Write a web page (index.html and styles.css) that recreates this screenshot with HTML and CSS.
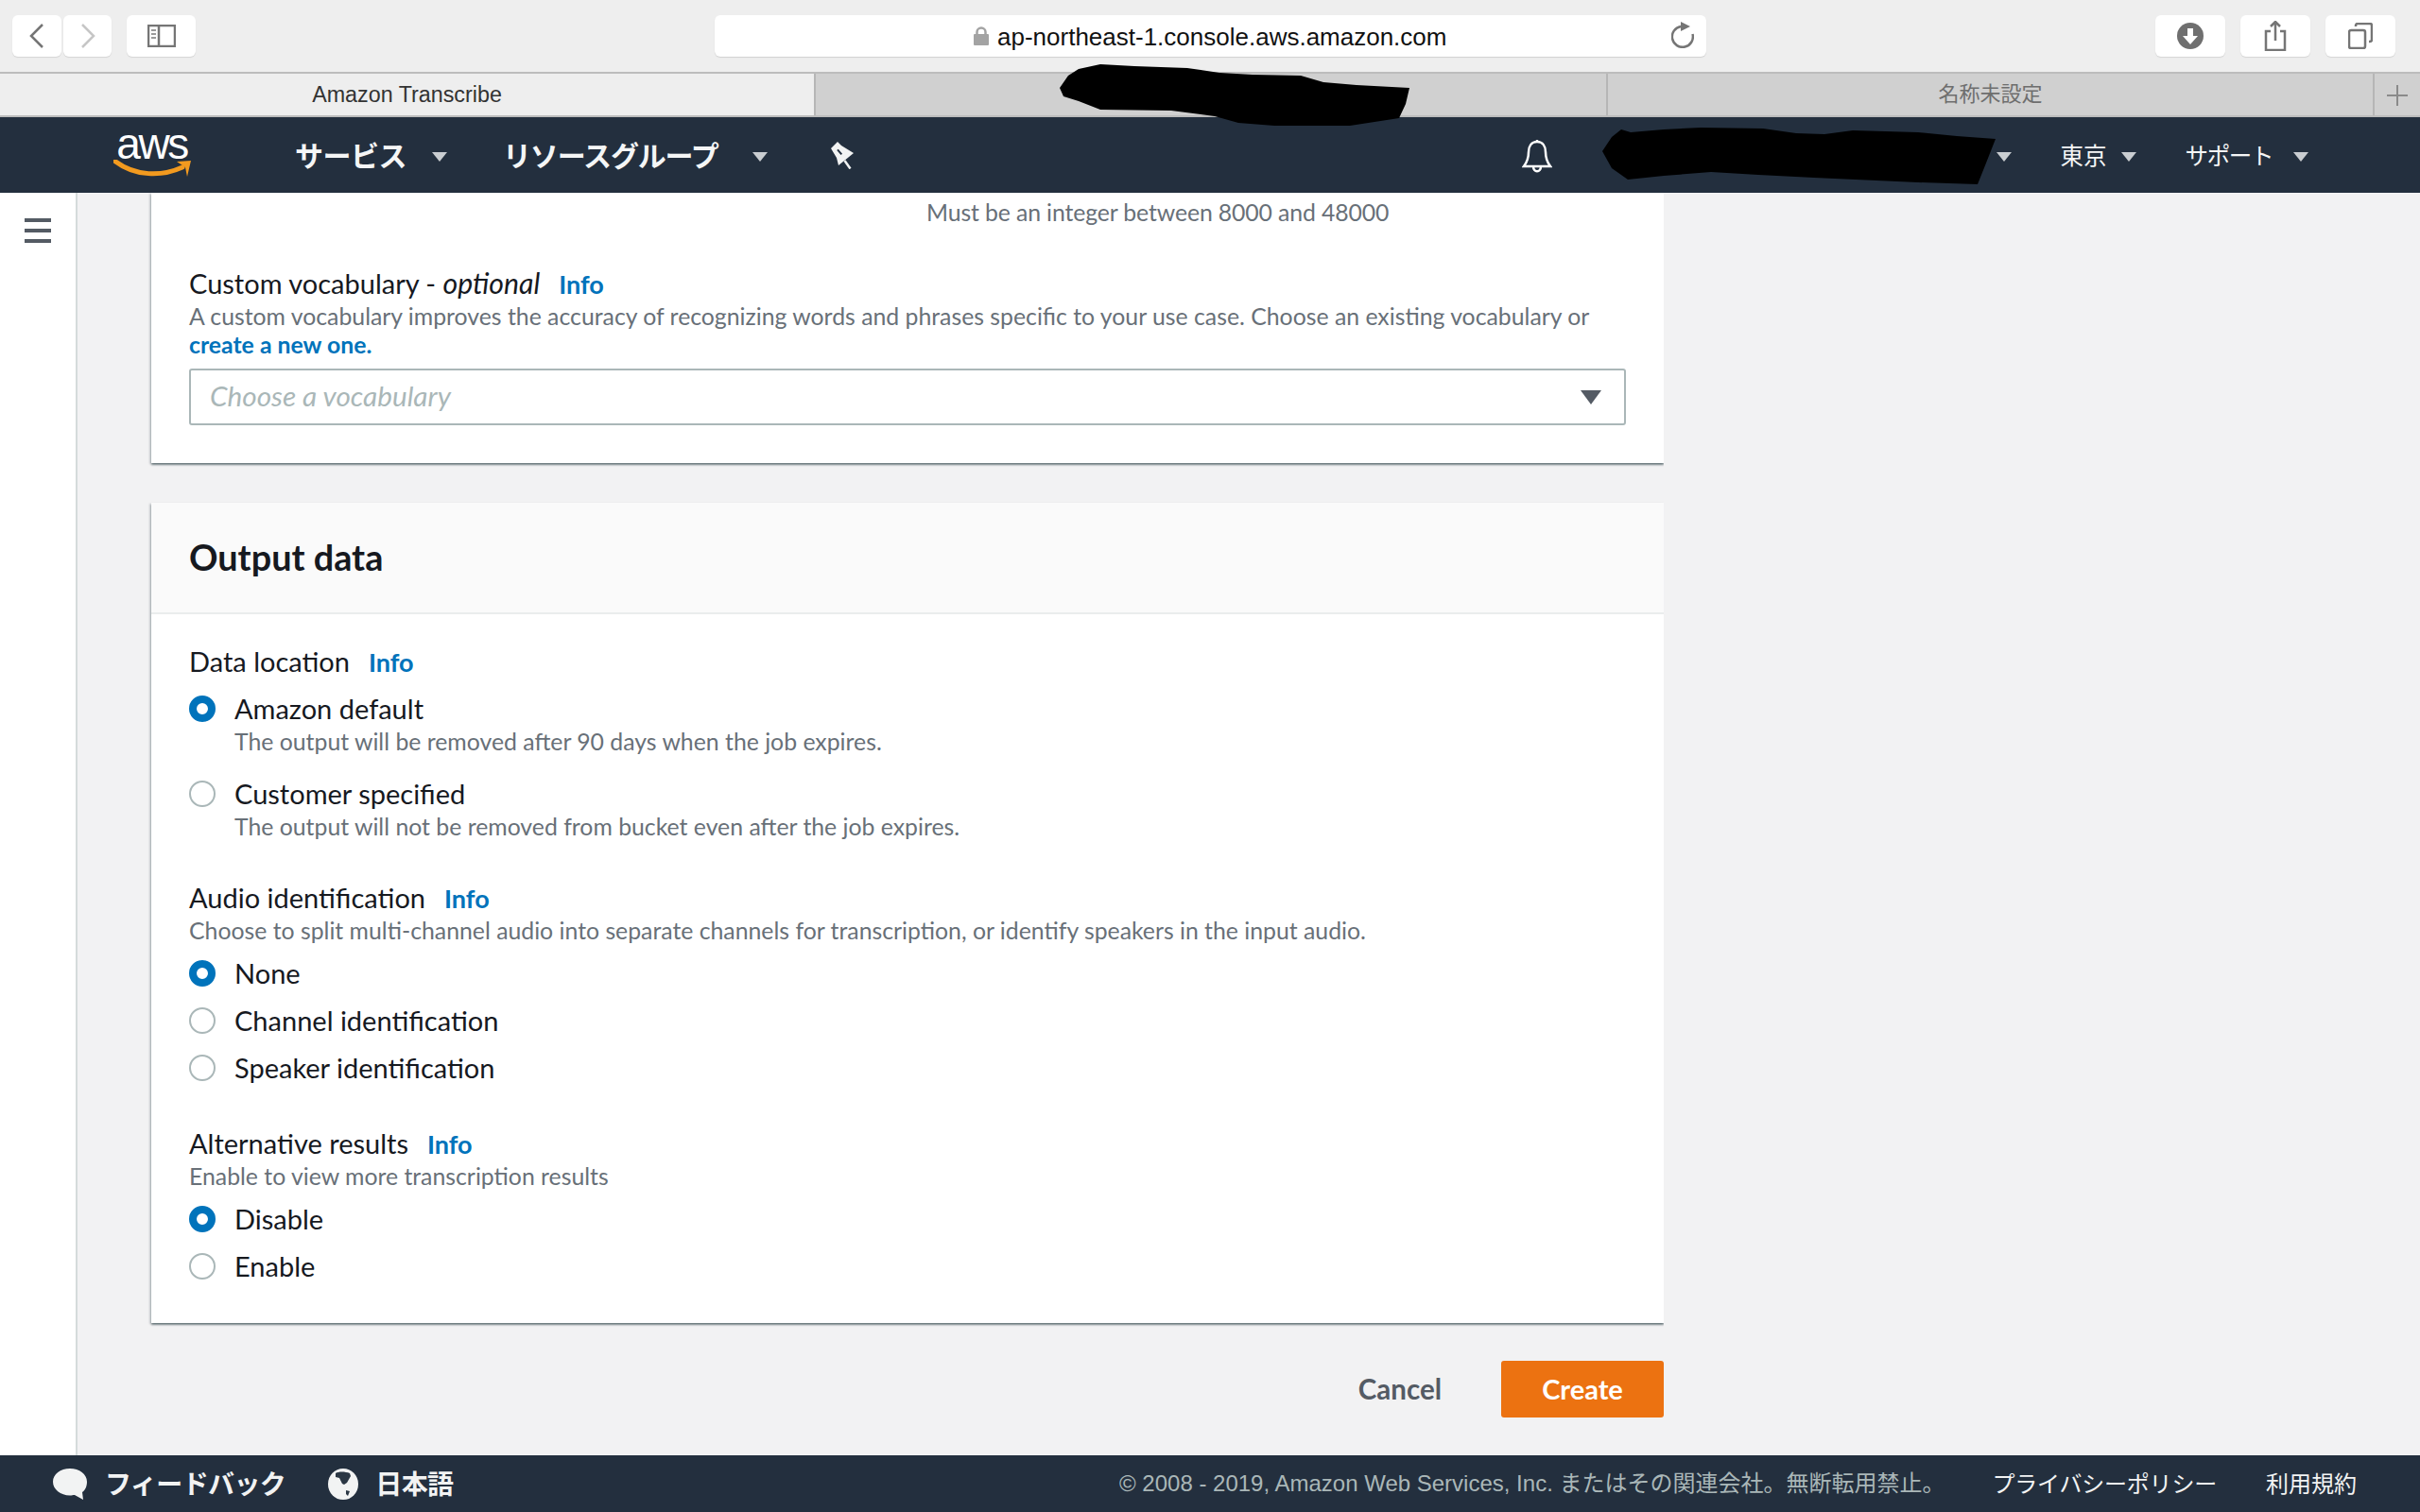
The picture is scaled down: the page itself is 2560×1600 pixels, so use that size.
FILE: index.html
```html
<!DOCTYPE html>
<html lang="en">
<head>
<meta charset="utf-8">
<title>Amazon Transcribe</title>
<link rel="stylesheet" href="styles.css">
</head>
<body>
<div class="app">
  <header class="toolbar">
    <div class="tb-group">
      <button class="tb-btn nav-back"><svg width="16" height="26" viewBox="0 0 16 26"><path d="M14 1 2 13l12 12" class="ic-line"/></svg></button>
      <button class="tb-btn nav-forward"><svg width="16" height="26" viewBox="0 0 16 26"><path d="M2 1l12 12L2 25" class="ic-faint"/></svg></button>
      <button class="tb-btn sidebar-btn"><svg width="30" height="24" viewBox="0 0 30 24"><rect x="1" y="1" width="28" height="22" class="ic-line"/><path d="M12 1v22" class="ic-line"/><path d="M4 6h5M4 10h5M4 14h5" class="ic-dots"/></svg></button>
    </div>
    <div class="address">
      <div class="address-url">
        <svg class="lock" width="16" height="20" viewBox="0 0 16 20"><path d="M3.500 9V6a4.500 4.500 0 0 1 9 0v3" class="ic-lock"/><rect y="8" width="16" height="12" rx="1" fill="#a3a3a3"/></svg>
        <span class="url-text">ap-northeast-1.console.aws.amazon.com</span>
      </div>
      <svg class="reload" width="24" height="28" viewBox="0 0 24 28"><path d="M10 5A11 11 0 1 0 22.500 13" class="ic-line"/><path d="M10 0l10 5-10 5z" fill="#757575"/></svg>
    </div>
    <div class="tb-group tb-right">
      <button class="tb-btn action-btn"><svg width="28" height="28" viewBox="0 0 28 28"><circle cx="14" cy="14" r="14" fill="#6f6f6f"/><path d="M11 6h6v8h5l-8 9-8-9h5z" fill="#fff"/></svg></button>
      <button class="tb-btn action-btn"><svg width="24" height="32" viewBox="0 0 24 32"><path d="M7 11H2v20h20V11h-5M12 21V1M7 6l5-5 5 5" class="ic-line"/></svg></button>
      <button class="tb-btn action-btn"><svg width="26" height="28" viewBox="0 0 26 28"><rect x="1" y="8" width="17" height="19" rx="2" class="ic-line"/><path d="M8 4V3a2 2 0 0 1 2-2h13a2 2 0 0 1 2 2v15a2 2 0 0 1-2 2h-1" class="ic-line"/></svg></button>
    </div>
  </header>

  <div class="tabs">
    <div class="tab tab-active">Amazon Transcribe</div>
    <div class="tab tab-middle"></div>
    <div class="tab tab-last">名称未設定</div>
    <div class="tab-add"><svg width="22" height="22" viewBox="0 0 22 22"><path d="M11 0v22M0 11h22" class="ic-plus"/></svg></div>
  </div>

  <nav class="topnav">
    <div class="aws-logo">
      <span class="aws-word">aws</span>
      <svg class="aws-smile" width="82" height="20" viewBox="0 0 82 20"><path d="M1 1c22 17 50 17 72 7" class="smile-line"/><path d="M67 2l15-1-4 17-2-10z" fill="#f29a1f"/></svg>
    </div>
    <span class="nav-main nav-services">サービス</span><i class="caret caret-services"></i>
    <span class="nav-main nav-groups">リソースグループ</span><i class="caret caret-groups"></i>
    <svg class="pin" width="27" height="29" viewBox="0 0 27 29"><path d="M2 7 9 0l4 4 13 8-16 13-2-8z" fill="#f2f3f3"/><path d="M9 8.300 13.300 13.300" class="pin-slot"/><path d="M16.500 20 22.500 28.500" class="pin-needle"/></svg>
    <span class="nav-spacer"></span>
    <svg class="bell" width="32" height="36" viewBox="0 0 32 36"><path d="M16 3c-6 0-9 5-9 11 0 7-2 11-5 15h28c-3-4-5-8-5-15 0-6-3-11-9-11zM16 3V1M12 29c0 7 8 7 8 0" class="bell-line"/></svg>
    <i class="caret caret-account"></i>
    <span class="nav-sub nav-region">東京</span><i class="caret caret-region"></i>
    <span class="nav-sub nav-support">サポート</span><i class="caret caret-support"></i>
  </nav>

  <div class="content">
    <aside class="sidebar">
      <span class="burger"><i></i><i></i><i></i></span>
    </aside>
    <main class="main">
      <section class="card card-cut">
        <p class="desc hint">Must be an integer between 8000 and 48000</p>
        <div class="label vocab-label">Custom vocabulary - <em>optional</em><a class="info">Info</a></div>
        <p class="desc desc-after">A custom vocabulary improves the accuracy of recognizing words and phrases specific to your use case. Choose an existing vocabulary or <a class="link">create a new one.</a></p>
        <div class="select">
          <span class="placeholder">Choose a vocabulary</span>
          <i class="select-arrow"></i>
        </div>
      </section>

      <section class="card card-output">
        <h2 class="card-head">Output data</h2>
        <div class="card-body">
          <div class="label">Data location<a class="info">Info</a></div>
          <div class="radio radio-first"><i class="dot on"></i>Amazon default</div>
          <p class="desc desc-after indent">The output will be removed after 90 days when the job expires.</p>
          <div class="radio radio-spaced"><i class="dot"></i>Customer specified</div>
          <p class="desc desc-after indent">The output will not be removed from bucket even after the job expires.</p>

          <div class="label group-gap">Audio identification<a class="info">Info</a></div>
          <p class="desc desc-after">Choose to split multi-channel audio into separate channels for transcription, or identify speakers in the input audio.</p>
          <div class="radio radio-after-desc"><i class="dot on"></i>None</div>
          <div class="radio radio-first"><i class="dot"></i>Channel identification</div>
          <div class="radio radio-first"><i class="dot"></i>Speaker identification</div>

          <div class="label group-gap-lg">Alternative results<a class="info">Info</a></div>
          <p class="desc desc-after">Enable to view more transcription results</p>
          <div class="radio radio-after-desc"><i class="dot on"></i>Disable</div>
          <div class="radio radio-first"><i class="dot"></i>Enable</div>
        </div>
      </section>

      <div class="actions">
        <a class="cancel">Cancel</a>
        <button class="create">Create</button>
      </div>
    </main>
  </div>

  <footer class="footer">
    <svg class="bubble" width="36" height="33" viewBox="0 0 36 33"><path d="M18 0c10 0 18 6 18 14 0 5-2 9-5 11l1 8-9-5c-2 0-3 .5-5 .5C8 28.500 0 22 0 14S8 0 18 0z" fill="#f2f3f3"/></svg>
    <span class="foot-strong foot-feedback">フィードバック</span>
    <svg class="globe" width="32" height="33" viewBox="0 0 32 33"><ellipse cx="16" cy="16.500" rx="16" ry="16.500" fill="#f2f3f3"/><path d="M8 5c3-2 10-2 15 0l1 3-4 7-3 2-2-1-3-6-4-1zM19 23l4 1-2 5-2-2z" fill="#2b3744"/></svg>
    <span class="foot-strong">日本語</span>
    <span class="nav-spacer"></span>
    <span class="copyright">© 2008 - 2019, Amazon Web Services, Inc. またはその関連会社。無断転用禁止。</span>
    <a class="foot-link privacy">プライバシーポリシー</a>
    <a class="foot-link terms">利用規約</a>
  </footer>

  <svg class="scribble" width="2560" height="204" viewBox="0 0 2560 204">
    <path d="M1121 93 1130 80 1141 73 1164 68 1200 70 1256 72 1290 77 1325 79 1376 80 1400 87 1435 90 1491 93 1487 110 1480 125 1428 133 1348 133 1310 130 1285 123 1239 117 1164 116 1141 107 1125 102z" fill="#000"/>
    <path d="M1695 160 1705 145 1715 137 1725 140 1760 137 1799 135 1865 136 1900 141 1930 142 1960 138 2029 140 2070 144 2111 147 2100 175 2092 195 2029 193 1919 188 1860 185 1810 182 1760 186 1722 190 1705 178z" fill="#000"/>
  </svg>
</div>
</body>
</html>
```
FILE: styles.css
```css
* { box-sizing: border-box; }
html, body { margin: 0; height: 100%; overflow: hidden; }
body { font-family: "Lato", "Noto Sans CJK JP", sans-serif; color: #16191f; background: #f2f2f3; }
p, h2 { margin: 0; }
i { display: block; }
button { border: 0; padding: 0; font: inherit; }

.app { position: relative; height: 1600px; display: flex; flex-direction: column; }

/* Safari chrome */
.toolbar { height: 76px; background: #eeeeee; display: flex; align-items: flex-start; padding: 16px 26px 0 13px; flex: none; }
.tb-group { display: flex; }
.tb-btn { height: 44px; background: #fff; border-radius: 6px; box-shadow: 0 1px 1px #d4d4d4; display: flex; align-items: center; justify-content: center; }
.nav-back { width: 52px; margin-right: 2px; }
.nav-forward { width: 51px; margin-right: 16px; }
.sidebar-btn { width: 73px; }
.address { width: 1049px; height: 44px; margin-left: 549px; background: #fff; border-radius: 6px; box-shadow: 0 1px 1px #d0d0d0; display: flex; align-items: center; position: relative; }
.address-url { display: flex; align-items: center; gap: 9px; margin-left: 274px; font: 26px/44px "Liberation Sans", sans-serif; color: #111; }
.url-text { padding-top: 2px; }
.reload { margin-left: auto; margin-right: 13px; margin-top: -3px; }
.tb-right { margin-left: auto; gap: 16px; }
.action-btn { width: 74px; }
.ic-line { fill: none; stroke: #757575; stroke-width: 2.500; }
.ic-faint { fill: none; stroke: #c6c6c6; stroke-width: 2.500; }
.ic-dots { stroke: #9a9a9a; stroke-width: 2; }
.ic-lock { fill: none; stroke: #a3a3a3; stroke-width: 2.500; }
.ic-plus { stroke: #8a8a8a; stroke-width: 2; }

.tabs { height: 48px; flex: none; display: flex; border-top: 2px solid #bcbcbc; border-bottom: 2px solid #bcbcbc; background: #d0d0d0; font: 23.300px/44px "Liberation Sans", "Noto Sans CJK JP", sans-serif; color: #6e6e6e; text-align: center; }
.tab { height: 44px; border-right: 2px solid #b6b6b6; }
.tab-active { width: 863px; background: #eeeeee; color: #333; }
.tab-middle { width: 838px; }
.tab-last { width: 811px; font-size: 22px; }
.tab-add { flex: 1; display: flex; align-items: center; justify-content: center; padding-top: 2px; }

/* AWS bar */
.topnav { height: 80px; flex: none; background: #232f3e; color: #f5f6f6; display: flex; align-items: center; position: relative; }
.aws-logo { width: 82px; height: 50px; margin-left: 120px; position: relative; color: #fff; }
.aws-word { display: block; font: 400 46px/26px "Liberation Sans", sans-serif; letter-spacing: -2.500px; text-align: center; margin: 0 0 0 -1px; }
.aws-smile { position: absolute; left: 0; bottom: 0; }
.smile-line { fill: none; stroke: #f29a1f; stroke-width: 5; stroke-linecap: round; }
.nav-main { font: 700 30px/40px "Noto Sans CJK JP", sans-serif; padding-bottom: 2px; }
.nav-services { margin-left: 110px; letter-spacing: -0.500px; }
.nav-groups { margin-left: 59px; letter-spacing: -1.150px; }
.caret { width: 0; height: 0; border-left: 8px solid transparent; border-right: 8px solid transparent; border-top: 10px solid #c9cdd1; margin-top: 4px; }
.caret-services { margin-left: 27px; }
.caret-groups { margin-left: 36px; }
.pin { margin-left: 65px; margin-top: 0; }
.pin-slot { stroke: #232f3e; stroke-width: 2; }
.pin-needle { stroke: #f2f3f3; stroke-width: 2.500; }
.nav-spacer { flex: 1; }
.bell { margin-right: 470px; margin-top: 2px; }
.bell-line { fill: none; stroke: #fff; stroke-width: 2.500; }
.nav-sub { font: 400 24.500px/40px "Noto Sans CJK JP", sans-serif; }
.nav-region { margin-left: 52px; }
.caret-region { margin-left: 15px; }
.nav-support { margin-left: 52px; letter-spacing: -1.400px; }
.caret-support { margin-left: 22px; margin-right: 118px; }

/* Page */
.content { flex: 1; display: flex; min-height: 0; }
.sidebar { width: 82px; flex: none; background: #fff; border-right: 2px solid #d5dbdb; padding: 27px 0 0 26px; }
.burger { display: flex; flex-direction: column; gap: 7px; width: 28px; }
.burger i { height: 4px; background: #545b64; }
.main { padding-left: 78px; width: 1678px; flex: none; overflow: hidden; padding-bottom: 4px; }

.card { width: 1600px; background: #fff; box-shadow: 0 2px 2px 0 rgba(0, 28, 36, .45), 2px 1px 2px 0 rgba(0, 28, 36, .15), -2px 1px 2px 0 rgba(0, 28, 36, .15); }
.card-cut { padding: 6px 40px 40px; }
.card-output { margin-top: 42px; }
.card-head { height: 118px; padding: 0 40px; background: #fafafa; border-bottom: 2px solid #eaeded; font-size: 37.800px; line-height: 116px; font-weight: 700; }
.card-body { padding: 32px 40px 42px; }

.label { font-size: 29px; line-height: 36px; }
.label em { font-style: italic; font-size: 30.200px; line-height: 1; }
.vocab-label { margin-top: 42px; }
.info { color: #0073bb; font-weight: 700; font-size: 27px; line-height: 1; margin-left: 20px; }
.desc { font-size: 24.800px; line-height: 30px; color: #687078; }
.hint { margin-left: 780px; letter-spacing: -.12px; }
.desc-after { margin-top: 2px; }
.indent { margin-left: 48px; }
.link { color: #0073bb; font-weight: 700; }

.select { height: 60px; margin-top: 10px; border: 2px solid #aab7b8; border-radius: 3px; display: flex; align-items: center; justify-content: space-between; padding: 0 24px 0 20px; font-size: 29.700px; font-style: italic; color: #aab7b8; }
.placeholder { padding-bottom: 3px; }
.select-arrow { width: 0; height: 0; border-left: 11px solid transparent; border-right: 11px solid transparent; border-top: 15px solid #545b64; }

.radio { display: flex; align-items: center; gap: 20px; font-size: 29px; line-height: 36px; }
.radio-first { margin-top: 14px; }
.radio-spaced { margin-top: 22px; }
.radio-after-desc { margin-top: 12px; }
.dot { width: 28px; height: 28px; border-radius: 50%; border: 2px solid #aab7b8; background: #fff; flex: none; }
.dot.on { border: 8px solid #0073bb; }
.group-gap { margin-top: 42px; }
.group-gap-lg { margin-top: 44px; }

.actions { width: 1600px; margin-top: 40px; display: flex; justify-content: flex-end; align-items: center; }
.cancel { font-size: 29.500px; font-weight: 700; color: #545b64; margin-right: 63px; padding-bottom: 2px; }
.create { width: 172px; height: 60px; background: #ec7211; color: #fff; border-radius: 3px; font-size: 29px; font-weight: 700; font-family: inherit; padding-bottom: 2px; }

/* Footer */
.footer { height: 60px; flex: none; background: #232f3e; display: flex; align-items: center; color: #f2f3f3; padding-left: 56px; }
.foot-strong { font: 700 28px/40px "Noto Sans CJK JP", sans-serif; letter-spacing: -0.600px; padding-bottom: 2px; }
.foot-feedback { margin-left: 19px; }
.globe { margin: 0 18px 0 45px; }
.copyright { font: 400 24px/40px "Liberation Sans", "Noto Sans CJK JP", sans-serif; color: #aab7b8; }
.foot-link { font: 400 24px/40px "Noto Sans CJK JP", sans-serif; color: #f2f3f3; padding-bottom: 2px; }
.privacy { margin-left: 50px; letter-spacing: -.2px; }
.terms { margin-left: 52px; margin-right: 67px; }

.scribble { position: absolute; left: 0; top: 0; pointer-events: none; }
```
